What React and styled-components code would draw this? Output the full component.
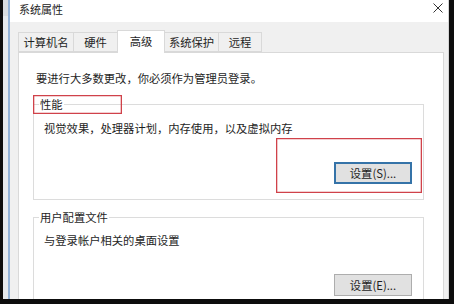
import React from 'react'
import styled, { createGlobalStyle } from 'styled-components'

const GlobalStyle = createGlobalStyle`
  html, body {
    margin: 0;
    padding: 0;
    background: #0d0d0d;
  }
  * {
    box-sizing: border-box;
  }
`

const Screen = styled.div`
  width: 454px;
  height: 304px;
  overflow: hidden;
  background: #0d0d0d;
  display: flex;
  flex-direction: column;
  font-family: "Noto Sans CJK SC", "Noto Sans", sans-serif;
  color: #1e1e1e;
`
const Desk = styled.div`
  height: 299px;
  display: flex;
`
const DarkEdge = styled.div`
  width: ${(p) => p.w}px;
  background: #0d0d0d;
`
// sliver of another window peeking out behind the dialog
const BehindStrip = styled.div`
  width: 5px;
  background: linear-gradient(#d9dde1 0 16px, #e6eaee 16px);
`
const Window = styled.div`
  flex: 1;
  display: flex;
  flex-direction: column;
  background: #f0f0f0;
  border-left: 2px solid #93b3d8;
  border-right: 1px solid #d4d4d4;
  overflow: hidden;
`
const TitleBar = styled.div`
  height: 22px;
  flex-shrink: 0;
  background: #ffffff;
  display: flex;
  align-items: flex-start;
  justify-content: space-between;
  padding: 2px 5px 0 9px;
`
const Title = styled.span`
  font-size: 11px;
  line-height: 14px;
  color: #222;
`
const Body = styled.div`
  flex: 1;
  display: flex;
  flex-direction: column;
  padding: 8px 4px 0 8px;
  min-height: 0;
`
const TabRow = styled.div`
  display: flex;
  align-items: flex-end;
  height: 22px;
  flex-shrink: 0;
`
const Tab = styled.div`
  width: ${(p) => p.w}px;
  height: ${(p) => (p.active ? 23 : 20)}px;
  margin-right: -1px;
  margin-bottom: ${(p) => (p.active ? -1 : 0)}px;
  position: relative;
  z-index: ${(p) => (p.active ? 2 : 1)};
  background: ${(p) => (p.active ? '#ffffff' : '#f0f0f0')};
  border: 1px solid #d9d9d9;
  border-bottom: ${(p) => (p.active ? 'none' : '1px solid #d9d9d9')};
  display: flex;
  align-items: center;
  justify-content: center;
  padding-bottom: ${(p) => (p.active ? 3 : 0)}px;
  font-size: 11.3px;
  line-height: 14px;
  color: #1e1e1e;
`
const Panel = styled.div`
  flex: 1;
  background: #ffffff;
  border: 1px solid #d9d9d9;
  border-bottom: none;
  padding: 18px 19px 0 14px;
  display: flex;
  flex-direction: column;
  min-height: 0;
`
const Intro = styled.div`
  margin-left: 3px;
  font-size: 11.3px;
  line-height: 14px;
  white-space: nowrap;
`
const GroupWrap = styled.div`
  position: relative;
  margin-top: ${(p) => p.top}px;
  flex-shrink: 0;
`
const Group = styled.fieldset`
  margin: 0;
  padding: ${(p) => p.pad}px 11px 15px 10px;
  border: 1px solid #dcdcdc;
  min-width: 0;
`
const Legend = styled.legend`
  margin-left: -5px;
  padding: 0 1px;
  font-size: 11.3px;
  line-height: 14px;
  color: #1e1e1e;
`
const Desc = styled.div`
  font-size: 11.3px;
  line-height: 14px;
  white-space: nowrap;
`
const ButtonRow = styled.div`
  display: flex;
  justify-content: flex-end;
  margin-top: 27px;
`
const Button = styled.button`
  width: 78px;
  height: 22px;
  padding: 0;
  background: #e1e1e1;
  border: ${(p) => (p.primary ? '2px solid #3573a8' : '1px solid #adadad')};
  font-family: inherit;
  font-size: 11.3px;
  line-height: 14px;
  color: #1e1e1e;
`
// red annotation boxes drawn over the dialog
const Mark = styled.div`
  position: absolute;
  z-index: 3;
  left: ${(p) => p.x}px;
  top: ${(p) => p.y}px;
  width: ${(p) => p.w}px;
  height: ${(p) => p.h}px;
  box-shadow: inset 0 0 0 1.3px #d0424a;
  pointer-events: none;
`

function CloseIcon() {
  return (
    <svg width="10" height="10" viewBox="0 0 10 10" style={{ marginTop: 1 }}>
      <path d="M0.5 0.5 L9.5 9.5 M9.5 0.5 L0.5 9.5" stroke="#333" strokeWidth="1" fill="none" />
    </svg>
  )
}

const tabs = [
  { label: '计算机名', w: 56 },
  { label: '硬件', w: 45 },
  { label: '高级', w: 48, active: true },
  { label: '系统保护', w: 55 },
  { label: '远程', w: 44 },
]

export default function App() {
  return (
    <Screen>
      <GlobalStyle />
      <Desk>
        <DarkEdge w={3} />
        <BehindStrip />
        <Window>
          <TitleBar>
            <Title>系统属性</Title>
            <CloseIcon />
          </TitleBar>
          <Body>
            <TabRow>
              {tabs.map((t) => (
                <Tab key={t.label} w={t.w} active={t.active}>{t.label}</Tab>
              ))}
            </TabRow>
            <Panel>
              <Intro>要进行大多数更改，你必须作为管理员登录。</Intro>
              <GroupWrap top={12}>
                <Group pad={10}>
                  <Legend>性能</Legend>
                  <Desc>视觉效果，处理器计划，内存使用，以及虚拟内存</Desc>
                  <ButtonRow>
                    <Button primary>设置(S)...</Button>
                  </ButtonRow>
                </Group>
                <Mark x={0} y={-2} w={89} h={19} />
                <Mark x={243} y={41} w={146} h={55} />
              </GroupWrap>
              <GroupWrap top={10}>
                <Group pad={9}>
                  <Legend>用户配置文件</Legend>
                  <Desc>与登录帐户相关的桌面设置</Desc>
                  <ButtonRow>
                    <Button>设置(E)...</Button>
                  </ButtonRow>
                </Group>
              </GroupWrap>
            </Panel>
          </Body>
        </Window>
        <DarkEdge w={5} />
      </Desk>
    </Screen>
  )
}
